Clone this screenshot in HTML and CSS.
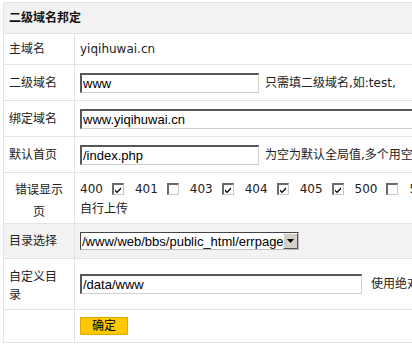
FILE: index.html
```
<!DOCTYPE html>
<html lang="zh-CN">
<head>
<meta charset="utf-8">
<title>二级域名邦定</title>
<link rel="stylesheet" href="styles.css">
</head>
<body>
<table class="form">
  <colgroup><col class="c-label"><col class="c-value"></colgroup>
  <tr class="head"><th colspan="2">二级域名邦定</th></tr>
  <tr class="r31"><td class="lbl">主域名</td><td class="val">yiqihuwai.cn</td></tr>
  <tr class="r36"><td class="lbl">二级域名</td><td class="val"><input class="txt w179" type="text" value="www"><span class="hint">只需填二级域名,如:test,</span></td></tr>
  <tr class="r36"><td class="lbl">绑定域名</td><td class="val"><input class="txt wlong" type="text" value="www.yiqihuwai.cn"></td></tr>
  <tr class="r36"><td class="lbl">默认首页</td><td class="val"><input class="txt w179" type="text" value="/index.php"><span class="hint">为空为默认全局值,多个用空格隔开</span></td></tr>
  <tr class="r51"><td class="lbl err">错误显示页</td><td class="val errs">
    <div class="codes"><span class="num">400</span><span class="cb on"><svg viewBox="0 0 8 8"><path d="M1 3.5 L3 5.5 L7 1.2 L7 3.2 L3 7.3 L1 5.3 Z" fill="#000"/></svg></span><span class="num">401</span><span class="cb"></span><span class="num">403</span><span class="cb on"><svg viewBox="0 0 8 8"><path d="M1 3.5 L3 5.5 L7 1.2 L7 3.2 L3 7.3 L1 5.3 Z" fill="#000"/></svg></span><span class="num">404</span><span class="cb on"><svg viewBox="0 0 8 8"><path d="M1 3.5 L3 5.5 L7 1.2 L7 3.2 L3 7.3 L1 5.3 Z" fill="#000"/></svg></span><span class="num">405</span><span class="cb on"><svg viewBox="0 0 8 8"><path d="M1 3.5 L3 5.5 L7 1.2 L7 3.2 L3 7.3 L1 5.3 Z" fill="#000"/></svg></span><span class="num">500</span><span class="cb"></span><span class="num">502</span><span class="cb"></span><span class="num">503</span><span class="cb"></span></div>
    <div class="upload">自行上传</div>
  </td></tr>
  <tr class="r35 grey"><td class="lbl">目录选择</td><td class="val"><span class="selwrap"><select class="sel"><option>/www/web/bbs/public_html/errpage</option></select><span class="selbtn"><svg viewBox="0 0 7 4"><path d="M0 0 H7 L3.5 4 Z" fill="#000"/></svg></span></span></td></tr>
  <tr class="r51"><td class="lbl custom">自定义目录</td><td class="val"><input class="txt w282" type="text" value="/data/www"><span class="hint h2">使用绝对路径</span></td></tr>
  <tr class="r33"><td class="lbl"></td><td class="val"><button class="ok" type="button">确定</button></td></tr>
</table>
</body>
</html>
```
FILE: styles.css
```
html, body {
  margin: 0;
  padding: 0;
  background: #fff;
}
body {
  width: 412px;
  height: 350px;
  overflow: hidden;
  font-family: "DejaVu Sans", "Noto Sans CJK SC", sans-serif;
  font-size: 12px;
  color: #222;
}
.form {
  border-collapse: collapse;
  width: 640px;
  margin: 2px 0 0 3px;
  table-layout: fixed;
}
.c-label { width: 71px; }
.form th, .form td {
  border: 1px solid #e3e3e3;
  padding: 0 0 0 5px;
  vertical-align: middle;
  text-align: left;
  line-height: 16px;
}
.head th {
  height: 30px;
  background: #f2f2f2;
  font-weight: bold;
  font-size: 12px;
  color: #111;
  padding-left: 5px;
}
.r31 td { height: 30px; }
.r36 td { height: 35px; }
.r51 td { height: 50px; }
.r35 td { height: 34px; }
.r33 td { height: 32px; }
.grey td { background: #f2f2f2; }
.lbl { white-space: normal; }
.val { white-space: nowrap; }
.form td.err {
  height: 45px;
  text-align: center;
  line-height: 22px;
  padding: 5px 7px 0 7px;
}
.form td.custom {
  height: 47px;
  line-height: 18px;
  padding-top: 3px;
  padding-right: 6px;
}
.txt {
  box-sizing: border-box;
  height: 20px;
  margin: 0;
  padding: 0 1px;
  vertical-align: middle;
  font-family: "Liberation Sans", Arial, sans-serif;
  font-size: 13px;
  color: #000;
  background: #fff;
  border-top: 2px solid #575757;
  border-left: 2px solid #575757;
  border-right: 1px solid #cfcfcf;
  border-bottom: 1px solid #cfcfcf;
  outline: none;
}
.w179 { width: 179px; }
.w282 { width: 282px; }
.wlong { width: 360px; }
.hint {
  margin-left: 6px;
  vertical-align: middle;
}
.h2 { margin-left: 9px; }
.form td.errs { height: 48px; padding-top: 2px; }
.codes {
  display: flex;
  align-items: center;
  height: 20px;
  white-space: nowrap;
}
.num { display: block; line-height: 20px; }
.cb {
  display: block;
  flex: none;
  box-sizing: border-box;
  width: 12px;
  height: 12px;
  margin: 0 11px 0 9px;
  background: #fff;
  border-top: 2px solid #6a6a6a;
  border-left: 2px solid #6a6a6a;
  border-right: 1px solid #c8c8c8;
  border-bottom: 1px solid #c8c8c8;
}
.cb svg {
  display: block;
  width: 8px;
  height: 8px;
  margin: 0.5px 0 0 0.5px;
}
.upload {
  height: 20px;
  line-height: 20px;
  overflow: hidden;
}
.selwrap {
  position: relative;
  display: inline-block;
  vertical-align: middle;
  width: 219px;
  height: 18px;
}
.sel {
  -webkit-appearance: none;
  appearance: none;
  display: block;
  box-sizing: border-box;
  width: 219px;
  height: 18px;
  margin: 0;
  padding: 0 0 0 1px;
  font-family: "Liberation Sans", Arial, sans-serif;
  font-size: 13px;
  color: #000;
  background: #fff;
  border-top: 1px solid #444;
  border-left: 1px solid #444;
  border-right: 1px solid #bdbdbd;
  border-bottom: 1px solid #bdbdbd;
  border-radius: 0;
  outline: none;
}
.selbtn {
  position: absolute;
  top: 1px;
  right: 1px;
  width: 15px;
  height: 16px;
  box-sizing: border-box;
  background: #d4d0c8;
  border-top: 1px solid #f4f4f4;
  border-left: 1px solid #f4f4f4;
  border-right: 1px solid #555;
  border-bottom: 1px solid #555;
  display: flex;
  align-items: center;
  justify-content: center;
}
.selbtn svg { width: 7px; height: 4px; display: block; }
.ok {
  display: block;
  width: 48px;
  height: 18px;
  margin: 0;
  padding: 0;
  font-family: "DejaVu Sans", "Noto Sans CJK SC", sans-serif;
  font-size: 12px;
  line-height: 16px;
  color: #000;
  background: #ffc800;
  border: 1px solid #e0a800;
  border-radius: 0;
}
```
